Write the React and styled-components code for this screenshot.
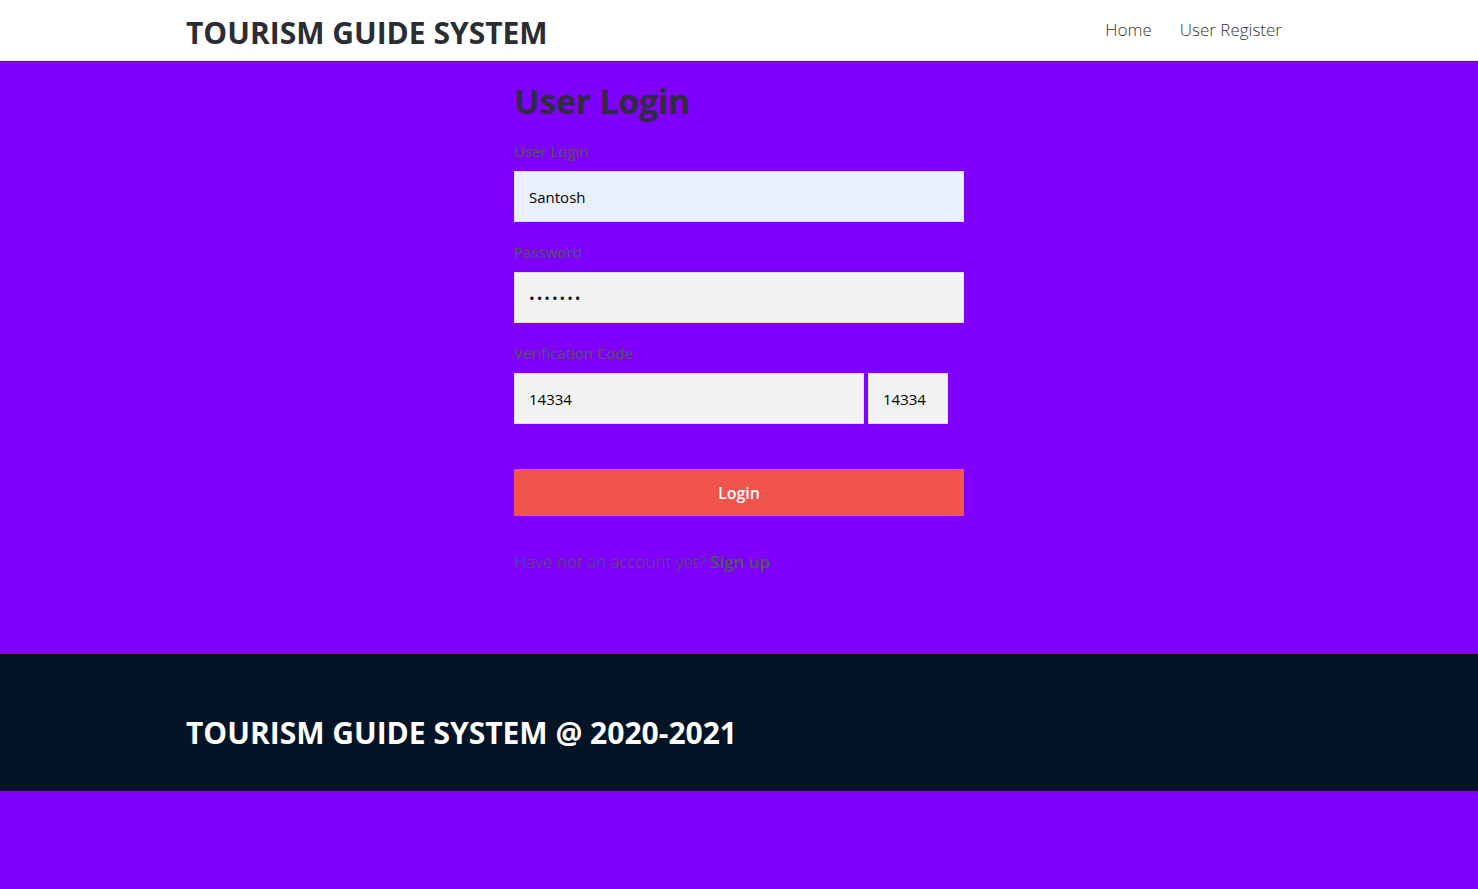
import React from 'react';
import styled, { createGlobalStyle } from 'styled-components';

const GlobalStyle = createGlobalStyle`
  * { box-sizing: border-box; }
  body {
    margin: 0;
    background: #7f00ff;
    font-family: "Open Sans", "Noto Sans", sans-serif;
  }
`

const Header = styled.header`
  background: #fff;
  height: 61px;
  border-bottom: 1px solid #e6e6e6;
`
const Container = styled.div`
  width: 1110px;
  margin: 0 auto;
  height: 100%;
  display: flex;
  align-items: center;
  justify-content: space-between;
`
const Brand = styled.div`
  font-size: 30px;
  font-weight: 700;
  color: #2b2d33;
  padding-left: 2px;
  padding-top: 4px;
`
const Nav = styled.nav`
  display: flex;
  gap: 12px;
  padding-right: 4px;
  padding-bottom: 2px;
`
const NavLink = styled.a`
  font-size: 17px;
  color: #333;
  font-weight: 300;
  padding: 0 8px;
  text-decoration: none;
`

const Main = styled.main`
  display: flex;
  justify-content: center;
  padding: 15px 0 81px;
`
const Form = styled.form`
  width: 450px;
  display: flex;
  flex-direction: column;
`
const Title = styled.h1`
  margin: 2px 0 17px;
  font-size: 34px;
  font-weight: 700;
  color: #2e2c3e;
  letter-spacing: -0.3px;
`
const Label = styled.label`
  font-size: 15px;
  color: #4d5e4c;
  margin-bottom: 10px;
`
const Row = styled.div`
  display: flex;
  gap: 4px;
  margin-bottom: ${p => p.$last ? '0' : '20px'};
`
const Input = styled.input`
  width: ${p => p.$w || '450px'};
  height: 51px;
  padding: 0 14px;
  border: 1px solid #dcdcdc;
  background: ${p => p.$filled ? '#e8f0fe' : '#f2f2f2'};
  font-family: inherit;
  font-size: 15px;
  color: #000;
  outline: none;
  &[type='password'] { letter-spacing: 2px; }
`
const Button = styled.button`
  margin-top: 45px;
  height: 47px;
  background: #f0544c;
  border: none;
  color: #fff;
  font-family: inherit;
  font-size: 16px;
  font-weight: 600;
`
const Note = styled.p`
  margin: 34px 0 0;
  font-size: 17px;
  font-weight: 300;
  color: #4d5e4c;
  b { font-weight: 600; }
`

const Footer = styled.footer`
  background: #021425;
  height: 137px;
`
const FooterText = styled.div`
  font-size: 30px;
  font-weight: 700;
  color: #fff;
  padding-left: 2px;
  padding-top: 20px;
`

export default function App() {
  return (
    <>
      <GlobalStyle />
      <Header>
        <Container>
          <Brand>TOURISM GUIDE SYSTEM</Brand>
          <Nav>
            <NavLink href="#">Home</NavLink>
            <NavLink href="#">User Register</NavLink>
          </Nav>
        </Container>
      </Header>
      <Main>
        <Form onSubmit={e => e.preventDefault()}>
          <Title>User Login</Title>
          <Label>User Login</Label>
          <Row><Input $filled defaultValue="Santosh" /></Row>
          <Label>Password</Label>
          <Row><Input type="password" defaultValue="1234567" /></Row>
          <Label>Verification Code</Label>
          <Row $last>
            <Input $w="350px" defaultValue="14334" />
            <Input $w="80px" defaultValue="14334" readOnly />
          </Row>
          <Button type="submit">Login</Button>
          <Note>Have not an account yet? <b>Sign up</b></Note>
        </Form>
      </Main>
      <Footer>
        <Container>
          <FooterText>TOURISM GUIDE SYSTEM @ 2020-2021</FooterText>
        </Container>
      </Footer>
    </>
  );
}
